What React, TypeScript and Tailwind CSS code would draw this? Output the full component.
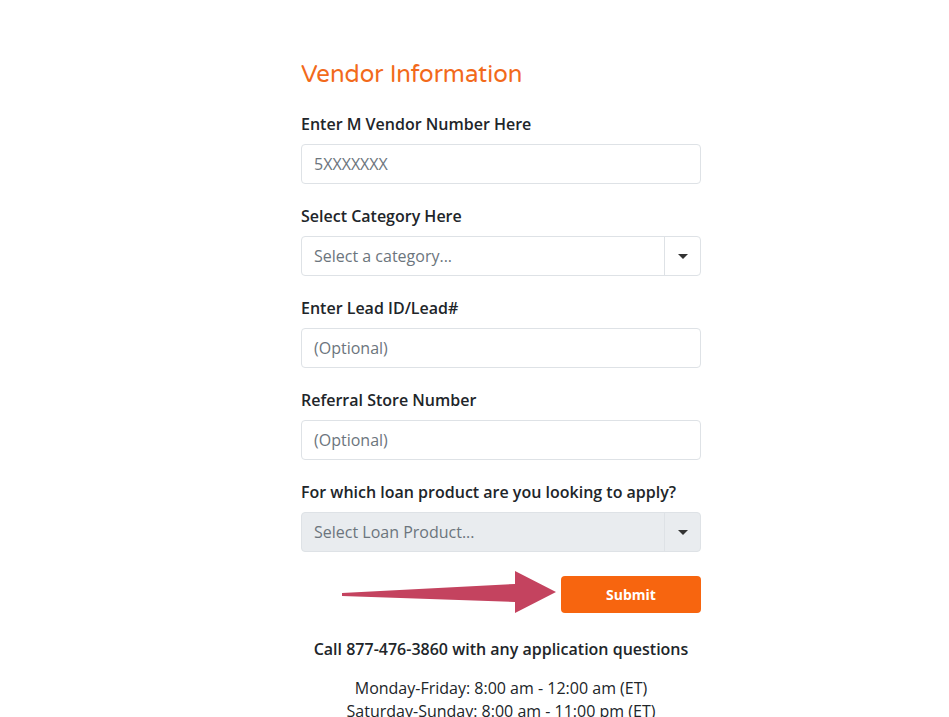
export default function App() {
  const field = "h-10 w-full rounded border border-[#dee2e6] bg-white px-3 text-[16px] text-[#6c757d] flex items-center";
  const label = "block text-[16px] leading-[22px] font-semibold mb-[9px]";
  return (
    <div className="min-h-[717px] bg-white font-['Open_Sans',sans-serif] text-[#212529]">
      <div className="relative ml-[301px] w-[400px] pt-[59px]">
        <h1 className="text-[24px] leading-8 text-[#f26a1b] font-['Varela_Round','Open_Sans',sans-serif] mb-[22px]">
          Vendor Information
        </h1>

        <label className={label}>Enter M Vendor Number Here</label>
        <div className={field + " mb-[21px]"}>5XXXXXXX</div>

        <label className={label}>Select Category Here</label>
        <div className="flex h-10 w-full rounded border border-[#dee2e6] bg-white mb-[21px]">
          <div className="flex-1 flex items-center px-3 text-[16px] text-[#6c757d]">Select a category...</div>
          <div className="w-9 border-l border-[#dee2e6] flex items-center justify-center">
            <span className="border-x-[5px] border-t-[5px] border-x-transparent border-t-[#333]" />
          </div>
        </div>

        <label className={label}>Enter Lead ID/Lead#</label>
        <div className={field + " mb-[21px]"}>(Optional)</div>

        <label className={label}>Referral Store Number</label>
        <div className={field + " mb-[21px]"}>(Optional)</div>

        <label className={label}>For which loan product are you looking to apply?</label>
        <div className="flex h-10 w-full rounded border border-[#dee2e6] bg-[#e9ecef]">
          <div className="flex-1 flex items-center px-3 text-[16px] text-[#6c757d]">Select Loan Product...</div>
          <div className="w-9 border-l border-[#dee2e6] flex items-center justify-center">
            <span className="border-x-[5px] border-t-[5px] border-x-transparent border-t-[#333]" />
          </div>
        </div>

        <div className="flex justify-end mt-6">
          <button className="h-[37px] w-[140px] rounded bg-[#f7650f] text-white text-[14px] font-bold">Submit</button>
        </div>

        <svg className="absolute left-[41px] top-[571px]" width="216" height="44" viewBox="0 0 216 44">
          <polygon points="0,22 173,13 173,0 214,21 173,42 173,31 0,25" fill="#c4435f" />
        </svg>

        <p className="mt-6 text-center text-[16px] leading-6 font-semibold">
          Call 877-476-3860 with any application questions
        </p>
        <p className="mt-4 text-center text-[16px] leading-[23px]">
          Monday-Friday: 8:00 am - 12:00 am (ET)
          <br />
          Saturday-Sunday: 8:00 am - 11:00 pm (ET)
        </p>
      </div>
    </div>
  );
}
